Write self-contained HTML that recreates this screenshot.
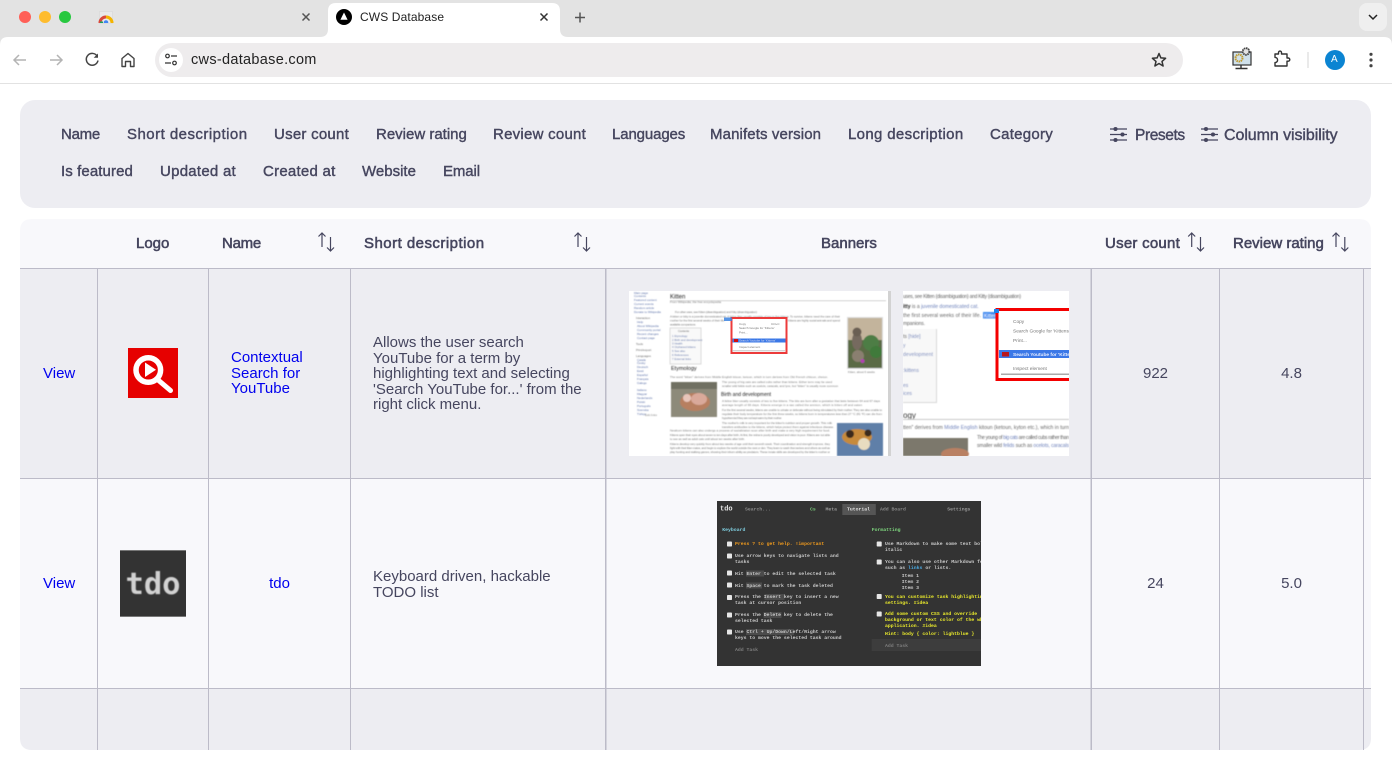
<!DOCTYPE html>
<html lang="en">
<head>
<meta charset="utf-8">
<title>CWS Database</title>
<style>
html,body{margin:0;padding:0;width:1392px;height:781px;overflow:hidden;background:#fff;font-family:"Liberation Sans",Arial,sans-serif}
#art{position:absolute;left:0;top:0}
.t{position:absolute;white-space:nowrap;line-height:18px;font-size:15px}
.f{color:#46465f;-webkit-text-stroke:.4px #46465f}
.h{color:#46465f;-webkit-text-stroke:.55px #46465f}
.b{color:#46465f;line-height:15.5px}
a{color:#0000ee;text-decoration:none}
.c{text-align:center}
.tiny text{font-family:"Liberation Sans",sans-serif}
</style>
</head>
<body>
<svg id="art" width="1392" height="781" viewBox="0 0 1392 781" xmlns="http://www.w3.org/2000/svg">
<defs>
<filter id="bl" x="-5%" y="-5%" width="110%" height="110%"><feGaussianBlur stdDeviation=".45"/></filter>
<filter id="blg" x="-5%" y="-5%" width="110%" height="110%"><feGaussianBlur stdDeviation=".6"/></filter>
<filter id="bl2" x="-5%" y="-5%" width="110%" height="110%"><feGaussianBlur stdDeviation=".35"/></filter>
<clipPath id="c1"><rect x="629" y="291" width="262" height="165"/></clipPath>
<clipPath id="c2"><rect x="903" y="291" width="166" height="165"/></clipPath>
<clipPath id="c3"><rect x="717" y="501" width="264" height="165"/></clipPath>
<clipPath id="fav"><rect x="98" y="12" width="16" height="11"/></clipPath>
</defs>

<!-- browser chrome -->
<rect width="1392" height="84" fill="#e3e3e3"/>
<path d="M0 84V45Q0 37 8 37H1384Q1392 37 1392 45V84Z" fill="#fff"/>
<rect y="83" width="1392" height="1" fill="#e2e2e2"/>
<path d="M320 37Q328 37 328 29V11Q328 3 336 3H552Q560 3 560 11V29Q560 37 568 37Z" fill="#fff"/>
<circle cx="25" cy="17" r="6" fill="#ff5f57"/><circle cx="45" cy="17" r="6" fill="#febc2e"/><circle cx="65" cy="17" r="6" fill="#28c840"/>
<rect x="99.500" y="11.500" width="13" height="12" fill="#e9e9e9" stroke="#d8d8d8" stroke-width=".6"/>
<g clip-path="url(#fav)" fill="none" stroke-width="3">
<path d="M100 23A5.800 5.800 0 0 1 106 17" stroke="#d9483b"/><path d="M106 17A5.800 5.800 0 0 1 112 23" stroke="#f4b400"/>
<path d="M100 23h3" stroke="#1e9e5a"/>
<circle cx="106" cy="22.500" r="2.300" fill="#4285f4" stroke="none"/>
</g>
<path d="M302.500 13.500l7 7m0-7l-7 7" stroke="#555" stroke-width="1.500" fill="none"/>
<path d="M540.500 13.500l7 7m0-7l-7 7" stroke="#333" stroke-width="1.500" fill="none"/>
<circle cx="344" cy="17" r="8" fill="#000"/><path d="M344 12.500l3.600 7.200h-7.200z" fill="#fff"/>
<path d="M580 12.500v10M575 17.500h10" stroke="#555" stroke-width="1.500" fill="none"/>
<rect x="1359" y="3" width="28" height="28" rx="8" fill="#efefef"/>
<path d="M1369 15l4 4 4-4" stroke="#222" stroke-width="1.500" fill="none"/>

<path d="M26 60H14M19 55L14 60l5 5" stroke="#b4b4b4" stroke-width="1.500" fill="none"/>
<path d="M50 60h12M57 55L62 60l-5 5" stroke="#b4b4b4" stroke-width="1.500" fill="none"/>
<path d="M97.300 56.300A5.900 5.900 0 1 0 98 60.500" stroke="#444" stroke-width="1.500" fill="none"/>
<path d="M98 53.500v4.300h-4.300z" fill="#444"/>
<path d="M122 66.500v-8l6-5 6 5v8h-3.500v-5h-5v5z" stroke="#444" stroke-width="1.400" fill="none" stroke-linejoin="round"/>

<rect x="155" y="43" width="1028" height="34" rx="17" fill="#eeeced"/>
<circle cx="171" cy="60" r="12" fill="#fff"/>
<circle cx="167.500" cy="56" r="1.800" fill="none" stroke="#333" stroke-width="1.200"/><path d="M171 56h6M165 63h6" stroke="#333" stroke-width="1.300"/>
<circle cx="174.500" cy="63" r="1.800" fill="none" stroke="#333" stroke-width="1.200"/>
<path d="M1159 53.500l1.900 4.400 4.700.4-3.600 3.100 1.100 4.600-4.100-2.500-4.100 2.500 1.100-4.600-3.600-3.100 4.700-.4z" fill="none" stroke="#333" stroke-width="1.500" stroke-linejoin="round"/>

<!-- extension icon -->
<rect x="1233" y="52" width="18" height="13" fill="#cfe0ea" stroke="#333" stroke-width="1.200"/>
<circle cx="1239" cy="58" r="3.500" fill="none" stroke="#c19a2c" stroke-width="2" stroke-dasharray="1.500 .7"/>
<circle cx="1246" cy="51.500" r="3.300" fill="#e3e3e3" stroke="#444" stroke-width="1.800" stroke-dasharray="1.600 .6"/>
<path d="M1241 65.500v2.500M1235.500 68.500h12" stroke="#333" stroke-width="1.400"/>
<!-- puzzle -->
<path d="M1275 54h3.500v-1.400a1.500 1.500 0 0 1 3 0V54h5.500v4h1.200a1.600 1.600 0 0 1 0 3.200H1287v4.800h-12v-3.400a2.600 2.600 0 0 0 0-5.200z" fill="none" stroke="#333" stroke-width="1.400" stroke-linejoin="round"/>
<rect x="1307.500" y="52" width="1" height="16" fill="#d4d4d4"/>
<circle cx="1335" cy="60" r="10" fill="#0b84d2"/>
<circle cx="1371" cy="54.300" r="1.600" fill="#444"/><circle cx="1371" cy="60" r="1.600" fill="#444"/><circle cx="1371" cy="65.700" r="1.600" fill="#444"/>

<!-- filter panel -->
<rect x="20" y="100" width="1351" height="108" rx="15" fill="#ededf2"/>
<g stroke="#46465f" stroke-width="1.300" fill="#46465f">
<path d="M1110 129h17M1110 134.500h17M1110 140h17"/>
<circle cx="1115.500" cy="129" r="1.400"/><circle cx="1122.500" cy="134.500" r="1.400"/><circle cx="1115.500" cy="140" r="1.400"/>
<path d="M1201 129h17M1201 134.500h17M1201 140h17"/>
<circle cx="1206" cy="129" r="1.400"/><circle cx="1213" cy="134.500" r="1.400"/><circle cx="1206" cy="140" r="1.400"/>
</g>

<!-- table backgrounds -->
<path d="M20 268V231Q20 219 32 219H1359Q1371 219 1371 231V268Z" fill="#f8f8fb"/>
<rect x="20" y="268" width="1351" height="210" fill="#ededf2"/>
<rect x="20" y="478" width="1351" height="210" fill="#f8f8fb"/>
<path d="M20 688H1371V738Q1371 750 1359 750H32Q20 750 20 738Z" fill="#ededf2"/>
<g fill="#bcbbc8">
<rect x="20" y="268" width="1351" height="1"/><rect x="20" y="478" width="1351" height="1"/><rect x="20" y="688" width="1351" height="1"/>
<rect x="97" y="268" width="1" height="482"/><rect x="208" y="268" width="1" height="482"/><rect x="350" y="268" width="1" height="482"/>
<rect x="605" y="268" width="1.500" height="482"/><rect x="1090.500" y="268" width="1.500" height="482"/><rect x="1219" y="268" width="1" height="482"/><rect x="1363" y="268" width="1" height="482"/>
</g>

<!-- sort icons -->
<g fill="none" stroke="#46465f" stroke-width="1.200">
<path d="M322 247V233M318.500 236.500L322 233l3.500 3.500M330.500 237v14M327 247.500L330.500 251l3.500-3.500"/>
<path d="M578 247V233M574.500 236.500L578 233l3.500 3.500M586.500 237v14M583 247.500L586.500 251l3.500-3.500"/>
<path d="M1191.700 247V233M1188.200 236.500L1191.700 233l3.500 3.500M1200.500 237v14M1197 247.500L1200.500 251l3.500-3.500"/>
<path d="M1336 247V233M1332.500 236.500L1336 233l3.500 3.500M1344.800 237v14M1341.300 247.500L1344.800 251l3.500-3.500"/>
</g>

<!-- logo 1 -->
<rect x="128" y="348" width="50" height="50" fill="#e60000"/>
<path d="M157.500 379.500L170.500 390.500" stroke="#fff" stroke-width="5" stroke-linecap="round"/>
<circle cx="148.300" cy="370" r="12.300" fill="none" stroke="#fff" stroke-width="5.500"/>
<path d="M145 362.500v14.500l11-7.200z" fill="#fff"/>

<!-- logo 2 -->
<rect x="120" y="550" width="66" height="67" fill="#333"/>
<rect x="120" y="550" width="66" height="1" fill="#777"/><rect x="120" y="616" width="66" height="1" fill="#777"/>
<text x="153" y="594" text-anchor="middle" font-family="DejaVu Sans Mono,monospace" font-size="30.500" font-weight="bold" fill="#d2d2d2" filter="url(#blg)">tdo</text>

<!-- banner 1 -->
<g clip-path="url(#c1)" class="tiny">
<rect x="629" y="291" width="262" height="165" fill="#fff"/>
<rect x="888" y="291" width="3" height="165" fill="#d2d2d2"/>
<g filter="url(#bl)">
<g font-size="3" fill="#5b70a8">
<text x="634" y="294">Main page</text><text x="634" y="297">Contents</text><text x="634" y="301">Featured content</text><text x="634" y="305">Current events</text><text x="634" y="309">Random article</text><text x="634" y="313">Donate to Wikipedia</text>
<text x="636" y="319" fill="#666">Interaction</text><text x="637" y="323">Help</text><text x="637" y="327">About Wikipedia</text><text x="637" y="331">Community portal</text><text x="637" y="335">Recent changes</text><text x="637" y="339">Contact page</text>
<text x="636" y="345" fill="#666">Tools</text><text x="636" y="351" fill="#666">Print/export</text><text x="636" y="357" fill="#666">Languages</text>
<text x="637" y="361">Català</text><text x="637" y="364">Česky</text><text x="637" y="368">Deutsch</text><text x="637" y="372">Eesti</text><text x="637" y="376">Español</text><text x="637" y="380">Français</text><text x="637" y="384">Galego</text><text x="637" y="391">Italiano</text><text x="637" y="395">Magyar</text><text x="637" y="399">Nederlands</text><text x="637" y="403">Polski</text><text x="637" y="407">Português</text><text x="637" y="411">Svenska</text><text x="637" y="415">Türkçe</text><text x="645" y="416" fill="#888">Edit links</text>
</g>
<text x="670" y="298.500" font-family="Liberation Serif,serif" font-size="6" fill="#222">Kitten</text>
<rect x="670" y="300.500" width="216" height=".5" fill="#aaa"/>
<g font-size="3" fill="#777">
<text x="670" y="303">From Wikipedia, the free encyclopedia</text>
<text x="675" y="313" textLength="82">For other uses, see Kitten (disambiguation) and Kitty (disambiguation)</text>
<text x="670" y="317.500" textLength="170">A kitten or kitty is a juvenile domesticated cat. A feline litter usually consists of two to five kittens. To survive, kittens need the care of their</text>
<text x="670" y="321.500" textLength="55">mother for the first several weeks of their life.</text>
<text x="788" y="321.500" textLength="52">Kittens are highly social animals and spend</text>
<text x="670" y="325.500" textLength="26">available companions.</text>
<text x="671" y="370" font-size="5.500" font-family="Liberation Serif,serif" fill="#222">Etymology</text>
<text x="670" y="378" textLength="158">The word "kitten" derives from Middle English kitoun, ketoun, which in turn derives from Old French chitoun, cheton.</text>
<text x="722" y="383" textLength="110">The young of big cats are called cubs rather than kittens. Either term may be used</text>
<text x="722" y="387" textLength="116">smaller wild felids such as ocelots, caracals, and lynx, but "kitten" is usually more common</text>
<text x="721" y="396" font-size="5" font-family="Liberation Serif,serif" fill="#222">Birth and development</text>
<text x="722" y="402" textLength="158">A feline litter usually consists of two to five kittens. The kits are born after a gestation that lasts between 64 and 67 days</text>
<text x="722" y="406" textLength="140">average length of 66 days. Kittens emerge in a sac called the amnion, which is bitten off and eaten</text>
<text x="722" y="411" textLength="160">For the first several weeks, kittens are unable to urinate or defecate without being stimulated by their mother. They are also unable to</text>
<text x="722" y="415" textLength="160">regulate their body temperature for the first three weeks, so kittens born in temperatures less than 27 °C (81 °F) can die from</text>
<text x="722" y="419" textLength="60">hypothermia if they are not kept warm by their mother.</text>
<text x="722" y="424" textLength="110">The mother's milk is very important for the kitten's nutrition and proper growth. This milk</text>
<text x="722" y="428" textLength="112">transfers antibodies to the kittens, which helps protect them against infectious disease.</text>
<text x="670" y="431.500" textLength="160">Newborn kittens can also undergo a process of socialization soon after birth and make a very high requirement for food.</text>
<text x="670" y="436" textLength="160">Kittens open their eyes about seven to ten days after birth. At first, the retina is poorly developed and vision is poor. Kittens are not able</text>
<text x="670" y="440" textLength="75">to see as well as adult cats until about ten weeks after birth.</text>
<text x="670" y="445" textLength="160">Kittens develop very quickly from about two weeks of age until their seventh week. Their coordination and strength improve, they</text>
<text x="670" y="449" textLength="160">fight with their litter-mates, and begin to explore the world outside the nest or den. They learn to wash themselves and others as well as</text>
<text x="670" y="453" textLength="160">play hunting and stalking games, showing their inborn ability as predators. These innate skills are developed by the kitten's mother or</text>
</g>
<rect x="670" y="328" width="31" height="36" fill="#f9f9f9" stroke="#ccc" stroke-width=".7"/>
<g font-size="2.800" fill="#5b70a8"><text x="678" y="332" fill="#555">Contents</text><text x="672" y="337">1 Etymology</text><text x="672" y="341">2 Birth and development</text><text x="672" y="344.500">3 Health</text><text x="672" y="348">4 Orphaned kittens</text><text x="672" y="352">5 See also</text><text x="672" y="356">6 References</text><text x="672" y="360">7 External links</text></g>
<rect x="847" y="317" width="36" height="52" fill="#ddd"/>
<rect x="848" y="318" width="34" height="24" fill="#c3b49c"/>
<rect x="848" y="340" width="34" height="28" fill="#5a6a45"/>
<circle cx="871" cy="343" r="8" fill="#4d7d45"/><circle cx="876" cy="352" r="6" fill="#3f7a3a"/><circle cx="858" cy="356" r="6" fill="#8a7f6f"/>
<ellipse cx="857" cy="341" rx="5" ry="9" fill="#766a5e"/><circle cx="857" cy="332" r="4.500" fill="#6b5f52"/>
<circle cx="862.500" cy="361" r="2" fill="#b03fb0"/>
<text x="848" y="373" font-size="2.800" fill="#777">Kitten, about 6 weeks</text>
<rect x="671" y="382" width="46" height="35" fill="#8d8a7a"/>
<ellipse cx="695" cy="402" rx="15" ry="9" fill="#b77f60"/><ellipse cx="699" cy="399" rx="8" ry="6" fill="#d9a99a"/><circle cx="687" cy="398" r="4" fill="#e7c5ba"/>
<rect x="671" y="382" width="46" height="7" fill="#6f7062"/>
<rect x="837" y="423" width="46" height="33" fill="#5e7fa8"/>
<ellipse cx="857" cy="437" rx="15" ry="8" fill="#c68a3a"/><circle cx="864" cy="444" r="6" fill="#e8dcc0"/><circle cx="850" cy="434" r="4" fill="#3a2a1c"/><circle cx="868" cy="433" r="3.500" fill="#3a2a1c"/>
</g>
<rect x="731.500" y="318" width="55" height="35" fill="#fff" stroke="#ec3b3b" stroke-width="2"/>
<g font-size="3" fill="#777" filter="url(#bl2)">
<text x="739" y="325">Copy</text><text x="771" y="325">Ctrl+C</text><text x="739" y="329">Search Google for 'Kittens'</text><text x="739" y="333.500">Print...</text>
<rect x="732.500" y="338.500" width="53" height="4" fill="#3b78e7"/><rect x="734" y="339" width="4" height="3" fill="#d41010"/>
<text x="739" y="341.700" fill="#dde">Search Youtube for 'Kittens'</text>
<text x="739" y="348">Inspect element</text>
<rect x="732" y="350.500" width="53" height=".7" fill="#aaa"/>
</g>
<rect x="724" y="317.500" width="8" height="3.500" fill="#3b83e0" opacity=".85"/>
</g>

<!-- banner 2 -->
<g clip-path="url(#c2)" class="tiny">
<rect x="903" y="291" width="166" height="165" fill="#fff"/>
<g filter="url(#bl)" font-size="5" fill="#666">
<text x="903" y="298" textLength="118">uses, see Kitten (disambiguation) and Kitty (disambiguation)</text>
<text x="903" y="308">
<tspan font-weight="bold" fill="#222">itty</tspan> is a <tspan fill="#6f83bb">juvenile domesticated cat.</tspan></text>
<text x="903" y="317" textLength="78">the first several weeks of their life.</text>
<text x="903" y="325" textLength="22">mpanions.</text>
<rect x="903" y="329" width="33" height="73" fill="#f8f8f8"/>
<rect x="936" y="329" width="1" height="73" fill="#d8d8d8"/><rect x="903" y="402" width="34" height="1" fill="#d8d8d8"/>
<g fill="#7083bb"><text x="903" y="338" fill="#555">ts <tspan fill="#7083bb">[hide]</tspan></text><text x="903" y="347">y</text><text x="903" y="356" textLength="30">development</text><text x="903" y="372">:kittens</text><text x="903" y="387">es</text><text x="903" y="395">ices</text></g>
<text x="903" y="418" font-size="8" font-family="Liberation Serif,serif" fill="#333">ogy</text>
<rect x="903" y="419" width="166" height=".8" fill="#bbb"/>
<text x="903" y="429" textLength="166">tten" derives from <tspan fill="#7083bb">Middle English</tspan> kitoun (ketoun, kyton etc.), which in turn</text>
<text x="977" y="439" textLength="92">The young of <tspan fill="#7083bb">big cats</tspan> are called cubs rather than</text>
<text x="977" y="447" textLength="92">smaller wild <tspan fill="#7083bb">felids</tspan> such as <tspan fill="#7083bb">ocelots, caracals</tspan></text>
<rect x="903" y="438" width="65" height="18" fill="#7b786c"/>
<ellipse cx="955" cy="454" rx="14" ry="6" fill="#b98063"/>
<rect x="983" y="312" width="14" height="6.500" fill="#3b8af0"/><text x="984" y="317.500" fill="#fff">Kitten</text>
</g>
<rect x="997" y="309.500" width="80" height="70" fill="#fff" stroke="#f40000" stroke-width="3"/>
<rect x="994" y="309" width="5" height="4" fill="#1e82ee"/>
<g filter="url(#bl2)" font-size="4.800" fill="#777">
<text x="1013" y="323">Copy</text><text x="1013" y="332.500">Search Google for 'Kittens'</text><text x="1013" y="342">Print...</text>
<rect x="999" y="350" width="72" height="8" fill="#3b78e7"/>
<rect x="1002" y="352" width="7" height="4.500" fill="#b8141c"/>
<text x="1013" y="356" fill="#e8edff" font-weight="bold">Search Youtube for 'Kitten</text>
<text x="1013" y="370">Inspect element</text>
<rect x="1001" y="373.500" width="70" height="1.500" fill="#aaa"/>
</g>
</g>

<!-- banner 3 -->
<g clip-path="url(#c3)">
<rect x="717" y="501" width="264" height="165" fill="#333"/>
<g filter="url(#bl2)" font-family="Liberation Mono,monospace" font-size="4.800" font-weight="bold" fill="#c9c9c9">
<rect x="842.300" y="504" width="33.500" height="11" fill="#555"/>
<text x="720" y="510.500" font-size="7" fill="#e4e4e4">tdo</text>
<text x="745" y="510.500" fill="#8a8a8a">Search...</text>
<text x="810" y="510.500" fill="#78c878">Cs</text>
<text x="825.500" y="510.500" fill="#9a9a9a">Meta</text>
<text x="847" y="510.500" fill="#e4e4e4">Tutorial</text>
<text x="880" y="510.500" fill="#888">Add Board</text>
<text x="947.300" y="510.500" fill="#999">Settings</text>
<text x="722.300" y="531" fill="#7fcfe0">Keyboard</text>
<text x="871.700" y="531" fill="#7fd97f">Formatting</text>
<g fill="#e6e6e6">
<rect x="727" y="541.500" width="5" height="5" rx=".8"/><rect x="727" y="553.500" width="5" height="5" rx=".8"/><rect x="727" y="570.500" width="5" height="5" rx=".8"/><rect x="727" y="582.500" width="5" height="5" rx=".8"/><rect x="727" y="595" width="5" height="5" rx=".8"/><rect x="727" y="612.500" width="5" height="5" rx=".8"/><rect x="727" y="629.500" width="5" height="5" rx=".8"/>
<rect x="876.700" y="541.500" width="5" height="5" rx=".8"/><rect x="876.700" y="559.500" width="5" height="5" rx=".8"/><rect x="876.700" y="594" width="5" height="5" rx=".8"/><rect x="876.700" y="611.500" width="5" height="5" rx=".8"/>
</g>
<g fill="#4c4c4c">
<rect x="746" y="570.500" width="18" height="6"/><rect x="746" y="582.500" width="16" height="6"/><rect x="764.500" y="594" width="20" height="6"/><rect x="763.500" y="612" width="18" height="6"/><rect x="746" y="629" width="48" height="6"/>
</g>
<text x="735" y="545" fill="#ef9a1e">Press ? to get help. !important</text>
<text x="735" y="557">Use arrow keys to navigate lists and</text>
<text x="735" y="563">tasks</text>
<text x="735" y="575">Hit  Enter  to edit the selected task</text>
<text x="735" y="587">Hit  Space  to mark the task deleted</text>
<text x="735" y="598">Press the  Insert  key to insert a new</text>
<text x="735" y="604">task at cursor position</text>
<text x="735" y="616">Press the  Delete  key to delete the</text>
<text x="735" y="622">selected task</text>
<text x="735" y="633">Use  Ctrl + Up/Down/Left/Right  arrow</text>
<text x="735" y="639">keys to move the selected task around</text>
<text x="735" y="651" fill="#7d7d7d">Add Task</text>
<text x="885" y="545">Use Markdown to make some text bold or</text>
<text x="885" y="551">italic</text>
<text x="885" y="563">You can also use other Markdown features</text>
<text x="885" y="569">such as <tspan fill="#4aa8e0">links</tspan> or lists.</text>
<text x="901.700" y="577">Item 1</text><text x="901.700" y="583">Item 2</text><text x="901.700" y="589">Item 3</text>
<g fill="#eaea2c">
<text x="885" y="598">You can customize task highlighting in</text>
<text x="885" y="604">settings. #idea</text>
<text x="885" y="615">Add some custom CSS and override</text>
<text x="885" y="621">background or text color of the whole</text>
<text x="885" y="627">application. #idea</text>
<text x="885" y="635">Hint: body { color: lightblue }</text>
</g>
<rect x="871.700" y="639" width="110" height="12" fill="#3d3d3d"/>
<text x="885" y="647" fill="#7d7d7d">Add Task</text>
</g>
</g>
</svg>

<!-- chrome text -->
<div class="t" style="left:360px;top:8px;font-size:12px;letter-spacing:.12px;color:#222">CWS Database</div>
<div class="t" style="left:191px;top:51px;font-size:14.500px;letter-spacing:.3px;color:#222">cws-database.com</div>
<div class="t" style="left:1331px;top:51px;font-size:10px;color:#fff">A</div>

<!-- filter labels -->
<div class="t f" style="left:61px;top:126px;letter-spacing:-.25px">Name</div>
<div class="t f" style="left:127px;top:126px;letter-spacing:.47px">Short description</div>
<div class="t f" style="left:274px;top:126px;letter-spacing:.25px">User count</div>
<div class="t f" style="left:376px;top:126px">Review rating</div>
<div class="t f" style="left:493px;top:126px;letter-spacing:.25px">Review count</div>
<div class="t f" style="left:612px;top:126px;letter-spacing:-.12px">Languages</div>
<div class="t f" style="left:710px;top:126px;letter-spacing:.12px">Manifets version</div>
<div class="t f" style="left:848px;top:126px;letter-spacing:.34px">Long description</div>
<div class="t f" style="left:990px;top:126px;letter-spacing:.27px">Category</div>
<div class="t f" style="left:61px;top:163px;letter-spacing:.1px">Is featured</div>
<div class="t f" style="left:160px;top:163px;letter-spacing:.26px">Updated at</div>
<div class="t f" style="left:263px;top:163px;letter-spacing:.25px">Created at</div>
<div class="t f" style="left:362px;top:163px">Website</div>
<div class="t f" style="left:443px;top:163px;letter-spacing:-.1px">Email</div>
<div class="t f" style="left:1135px;top:127px;font-size:15.500px;letter-spacing:-.4px">Presets</div>
<div class="t f" style="left:1224px;top:127px;font-size:16px;letter-spacing:-.07px">Column visibility</div>

<!-- table header -->
<div class="t h" style="left:136px;top:235px">Logo</div>
<div class="t h" style="left:222px;top:235px;letter-spacing:-.25px">Name</div>
<div class="t h" style="left:364px;top:235px;letter-spacing:.47px">Short description</div>
<div class="t h" style="left:821px;top:235px">Banners</div>
<div class="t h" style="left:1105px;top:235px;letter-spacing:.25px">User count</div>
<div class="t h" style="left:1233px;top:235px">Review rating</div>

<!-- row 1 -->
<div class="t" style="left:43px;top:365px"><a href="#">View</a></div>
<div class="t" style="left:231px;top:350px;line-height:15.500px"><a href="#">Contextual<br>Search for<br>YouTube</a></div>
<div class="t b" style="left:373px;top:335px">Allows the user search<br>YouTube for a term by<br>highlighting text and selecting<br>'Search YouTube for...' from the<br>right click menu.</div>
<div class="t c" style="left:1092px;width:127px;top:365px;color:#46465f">922</div>
<div class="t c" style="left:1220px;width:143px;top:365px;color:#46465f">4.8</div>

<!-- row 2 -->
<div class="t" style="left:43px;top:575px"><a href="#">View</a></div>
<div class="t c" style="left:209px;width:141px;top:575px"><a href="#">tdo</a></div>
<div class="t b" style="left:373px;top:569px">Keyboard driven, hackable<br>TODO list</div>
<div class="t c" style="left:1092px;width:127px;top:575px;color:#46465f">24</div>
<div class="t c" style="left:1220px;width:143px;top:575px;color:#46465f">5.0</div>
</body>
</html>
